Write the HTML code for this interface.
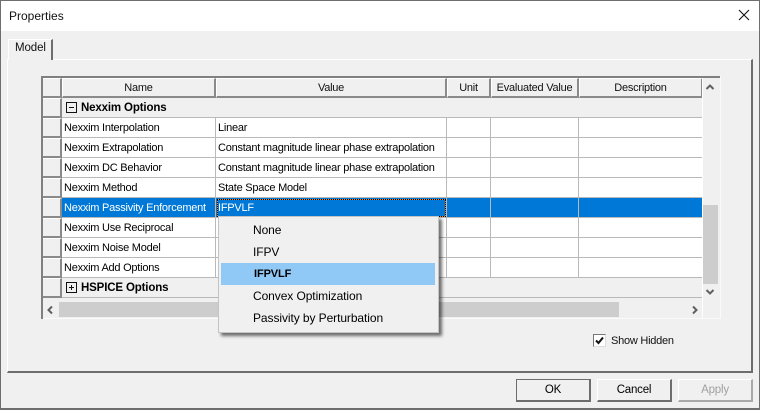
<!DOCTYPE html>
<html>
<head>
<meta charset="utf-8">
<style>
html,body{margin:0;padding:0}
body{width:760px;height:410px;position:relative;overflow:hidden;background:#f0f0f0;font-family:"Liberation Sans",sans-serif;font-size:11px;letter-spacing:-.24px;color:#000}
div{position:absolute;box-sizing:border-box}
.t{white-space:nowrap;line-height:14px;height:14px}
.h{background:#f0f0f0;border-top:1px solid #fff;border-left:1px solid #fff;border-right:2px solid #8a8a8a;border-bottom:2px solid #8a8a8a;text-align:center;line-height:18px;color:#111}
.rh{left:42px;width:20px;height:20px;background:#f0f0f0;border-top:1px solid #fff;border-left:1px solid #fff;border-right:2px solid #8a8a8a;border-bottom:2px solid #8a8a8a}
.hl{left:62px;width:640px;height:1px;background:#b9b9b9}
.vl{width:1px;background:#b9b9b9}
.b{font-weight:bold;font-size:11.5px;letter-spacing:-.15px}
.btn{top:379px;height:23px;background:#f0f0f0;border-top:1px solid #fff;border-left:1px solid #fff;border-right:2px solid #6d6d6d;border-bottom:2px solid #6d6d6d;text-align:center;line-height:20px;font-size:11.5px;letter-spacing:-.2px}
.menu{font-size:12px;letter-spacing:-.08px}
</style>
</head>
<body>
<!-- window -->
<div style="left:0;top:0;width:760px;height:410px;border:1px solid #6e6e6e;border-bottom-width:2px"></div>
<div style="left:1px;top:1px;width:758px;height:30px;background:#fff"></div>
<div class="t" style="left:9px;top:9px;font-size:12px;letter-spacing:0;color:#111">Properties</div>
<svg style="position:absolute;left:738px;top:9px" width="12" height="12"><path d="M1 1L11 11M11 1L1 11" stroke="#111" stroke-width="1.1" fill="none"/></svg>

<!-- tab panel -->
<div style="left:7px;top:59px;width:746px;height:314px;border-top:1px solid #fff;border-left:1px solid #fff;border-right:2px solid #6d6d6d;border-bottom:2px solid #6d6d6d"></div>
<div style="left:8px;top:39px;width:45px;height:21px;background:#f0f0f0;border-top:1px solid #fff;border-left:1px solid #fff;border-right:2px solid #6d6d6d"></div>
<div class="t" style="left:15px;top:41px;color:#111;font-size:11.5px;letter-spacing:-.1px">Model</div>

<!-- corner + row headers -->
<div class="rh" style="top:78px"></div>
<div class="rh" style="top:98px"></div>
<div class="rh" style="top:118px"></div>
<div class="rh" style="top:138px"></div>
<div class="rh" style="top:158px"></div>
<div class="rh" style="top:178px"></div>
<div class="rh" style="top:198px"></div>
<div class="rh" style="top:218px"></div>
<div class="rh" style="top:238px"></div>
<div class="rh" style="top:258px"></div>
<div class="rh" style="top:278px"></div>

<!-- columns header -->
<div class="h" style="left:62px;top:78px;width:154px;height:20px">Name</div>
<div class="h" style="left:216px;top:78px;width:231px;height:20px">Value</div>
<div class="h" style="left:447px;top:78px;width:44px;height:20px">Unit</div>
<div class="h" style="left:491px;top:78px;width:88px;height:20px">Evaluated Value</div>
<div class="h" style="left:579px;top:78px;width:124px;height:20px">Description</div>

<!-- white row area -->
<div style="left:62px;top:118px;width:640px;height:160px;background:#fff"></div>
<div style="left:62px;top:198px;width:640px;height:19px;background:#0078d7"></div>

<!-- grid lines -->
<div class="vl" style="left:215px;top:118px;height:160px"></div>
<div class="vl" style="left:446px;top:118px;height:160px"></div>
<div class="vl" style="left:490px;top:118px;height:160px"></div>
<div class="vl" style="left:578px;top:118px;height:160px"></div>
<div class="hl" style="top:117px"></div>
<div class="hl" style="top:137px"></div>
<div class="hl" style="top:157px"></div>
<div class="hl" style="top:177px"></div>
<div class="hl" style="top:197px"></div>
<div class="hl" style="top:217px"></div>
<div class="hl" style="top:237px"></div>
<div class="hl" style="top:257px"></div>
<div class="hl" style="top:277px"></div>
<div class="hl" style="top:297px"></div>

<!-- group rows -->
<div style="left:66px;top:102px;width:11px;height:11px;border:1px solid #111;background:#f0f0f0"></div>
<div style="left:69px;top:107px;width:5px;height:1px;background:#111"></div>
<div class="t b" style="left:81px;top:101px">Nexxim Options</div>
<div style="left:66px;top:282px;width:11px;height:11px;border:1px solid #111;background:#f0f0f0"></div>
<div style="left:69px;top:287px;width:5px;height:1px;background:#111"></div>
<div style="left:71px;top:285px;width:1px;height:5px;background:#111"></div>
<div class="t b" style="left:81px;top:281px">HSPICE Options</div>

<!-- names -->
<div class="t" style="left:64px;top:121px">Nexxim Interpolation</div>
<div class="t" style="left:64px;top:141px">Nexxim Extrapolation</div>
<div class="t" style="left:64px;top:161px">Nexxim DC Behavior</div>
<div class="t" style="left:64px;top:181px">Nexxim Method</div>
<div class="t" style="left:64px;top:201px;color:#fff">Nexxim Passivity Enforcement</div>
<div class="t" style="left:64px;top:221px">Nexxim Use Reciprocal</div>
<div class="t" style="left:64px;top:241px">Nexxim Noise Model</div>
<div class="t" style="left:64px;top:261px">Nexxim Add Options</div>

<!-- values -->
<div class="t" style="left:218px;top:121px">Linear</div>
<div class="t" style="left:218px;top:141px">Constant magnitude linear phase extrapolation</div>
<div class="t" style="left:218px;top:161px">Constant magnitude linear phase extrapolation</div>
<div class="t" style="left:218px;top:181px">State Space Model</div>
<div class="t" style="left:218px;top:201px;color:#fff">IFPVLF</div>
<div style="left:217px;top:199px;width:229px;height:18px;border:1px solid #f08a20"></div>
<div style="left:217px;top:199px;width:229px;height:18px;border:1px dotted #000"></div>

<!-- vertical scrollbar -->
<div style="left:703px;top:78px;width:17px;height:224px;background:#f0f0f0"></div>
<div style="left:702px;top:78px;width:1px;height:240px;background:#fff"></div>
<div style="left:703px;top:205px;width:15px;height:79px;background:#cdcdcd"></div>
<svg style="position:absolute;left:705px;top:83px" width="10" height="8"><path d="M1.5 6L5 2.5L8.500 6" stroke="#606060" stroke-width="2" fill="none"/></svg>
<svg style="position:absolute;left:705px;top:288px" width="10" height="8"><path d="M1.500 2L5 5.500L8.500 2" stroke="#606060" stroke-width="2" fill="none"/></svg>

<!-- horizontal scrollbar -->
<div style="left:59px;top:302px;width:560px;height:15px;background:#cdcdcd"></div>
<svg style="position:absolute;left:46px;top:305px" width="8" height="10"><path d="M6 1.500L2.500 5L6 8.500" stroke="#606060" stroke-width="2" fill="none"/></svg>
<svg style="position:absolute;left:691px;top:305px" width="8" height="10"><path d="M2 1.500L5.500 5L2 8.500" stroke="#606060" stroke-width="2" fill="none"/></svg>

<!-- grid frame -->
<div style="left:41px;top:76px;width:679px;height:2px;background:#808080"></div>
<div style="left:41px;top:76px;width:2px;height:243px;background:#808080"></div>
<div style="left:43px;top:318px;width:678px;height:1px;background:#fafafa"></div>
<div style="left:720px;top:76px;width:1px;height:243px;background:#fafafa"></div>

<!-- dropdown -->
<div style="left:218px;top:216px;width:221px;height:117px;background:#f0f0f0;border:1px solid #c4c4c4;box-shadow:3px 3px 3px rgba(0,0,0,.55)"></div>
<div style="left:221px;top:263px;width:214px;height:22px;background:#90c8f6"></div>
<div class="t menu" style="left:253px;top:223px">None</div>
<div class="t menu" style="left:253px;top:245px">IFPV</div>
<div class="t menu" style="left:254px;top:267px;font-weight:bold;font-size:11px;letter-spacing:-.1px">IFPVLF</div>
<div class="t menu" style="left:253px;top:289px">Convex Optimization</div>
<div class="t menu" style="left:253px;top:311px">Passivity by Perturbation</div>

<!-- checkbox -->
<div style="left:593px;top:334px;width:13px;height:13px;background:#fff;border:1px solid #777;border-right-color:#ddd;border-bottom-color:#ddd"></div>
<svg style="position:absolute;left:595px;top:336px" width="9" height="9"><path d="M1 4.500L3.500 7L8 1.500" stroke="#111" stroke-width="2" fill="none"/></svg>
<div class="t" style="left:611px;top:334px;color:#111">Show Hidden</div>

<!-- buttons -->
<div class="btn" style="left:516px;width:75px;border:1px solid #6d6d6d;border-right-width:2px;border-bottom-width:2px">OK</div>
<div class="btn" style="left:597px;width:75px">Cancel</div>
<div class="btn" style="left:678px;width:75px;color:#a0a0a0;border-right-color:#a8a8a8;border-bottom-color:#a8a8a8">Apply</div>
</body>
</html>
